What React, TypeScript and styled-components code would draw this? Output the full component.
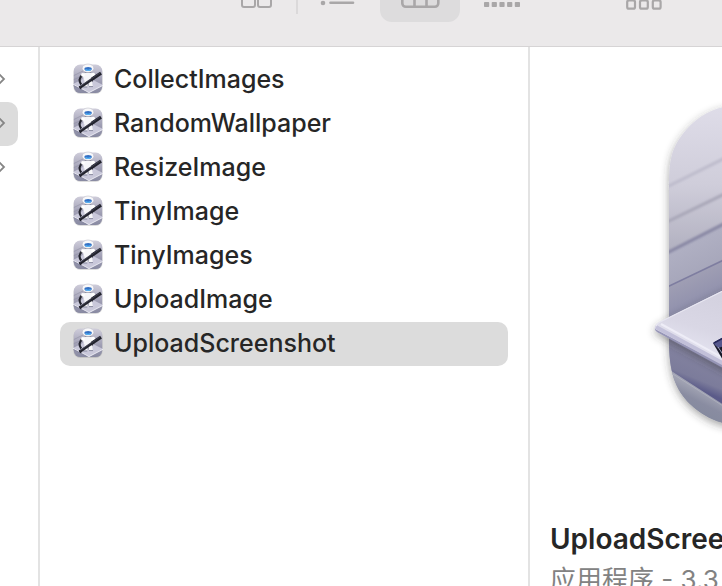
import React from "react";
import styled, { createGlobalStyle } from "styled-components";

const Global = createGlobalStyle`
  *, *::before, *::after { box-sizing: border-box; }
  body { margin: 0; overflow: hidden; background: #fff; }
  button { font: inherit; color: inherit; border: 0; padding: 0; background: none; text-align: left; }
  svg { display: block; flex: none; }
`;

const Window = styled.div`
  height: 100vh;
  display: flex;
  flex-direction: column;
  overflow: hidden;
  color: #262626;
  font-family: Inter, "Noto Sans CJK SC", sans-serif;
  font-size: 26px;
`;

const Toolbar = styled.header`
  display: flex;
  align-items: flex-start;
  flex: none;
  padding: 0 0 24px 216px;
  background: #ebe9ea;
  border-bottom: 1px solid #d6d4d5;
`;

const ViewButton = styled.button<{ $active?: boolean }>`
  flex: none;
  width: 80px;
  height: 22px;
  border-radius: 0 0 12px 12px;
  background: ${(p) => (p.$active ? "#dddcdd" : "transparent")};
`;

const Separator = styled.span<{ $visible?: boolean }>`
  flex: none;
  width: 2px;
  height: 14px;
  margin-right: ${(p) => (p.$visible ? 2 : 0)}px;
  background: ${(p) => (p.$visible ? "#dbd9da" : "transparent")};
`;

const GroupMenu = styled.div`
  display: flex;
  margin-left: 62px;
`;

const Browser = styled.main`
  flex: 1;
  min-height: 0;
  display: flex;
`;

const ParentColumn = styled.nav`
  flex: none;
  width: 40px;
  padding: 11px 20px 0 0;
  border-right: 2px solid #e3e3e3;
`;

const ParentRow = styled.button<{ $selected?: boolean }>`
  display: flex;
  align-items: center;
  width: 100%;
  height: 44px;
  padding-bottom: 2px;
  border-radius: 0 10px 10px 0;
  background: ${(p) => (p.$selected ? "#dcdcdc" : "transparent")};
`;

const FileColumn = styled.section`
  flex: none;
  width: 490px;
  border-right: 2px solid #e3e3e3;
`;

const FileList = styled.ul`
  list-style: none;
  margin: 0;
  padding: 11px 20px 0;
`;

const FileRow = styled.button<{ $selected?: boolean }>`
  display: flex;
  align-items: center;
  gap: 10px;
  width: 100%;
  height: 44px;
  padding: 0 12px 2px;
  border-radius: 10px;
  font-size: 25px;
  font-weight: 450;
  line-height: 32px;
  background: ${(p) => (p.$selected ? "#dcdcdc" : "transparent")};
`;

const Preview = styled.aside`
  flex: 1;
  min-width: 0;
  overflow: hidden;
  padding: 43px 0 0 20px;
  white-space: nowrap;
`;

const Artwork = styled.div`
  padding-left: 80px;
`;

const PreviewName = styled.h1`
  margin: 71px 0 0;
  font-size: 28px;
  line-height: 36px;
  font-weight: 600;
`;

const PreviewKind = styled.p`
  margin: 5px 0 0;
  line-height: 36px;
  color: #828282;
`;

const tint = "#a9a7a8";

const GridIcon = () => (
  <svg width="80" height="22" fill="none" stroke={tint} strokeWidth="2" aria-hidden="true">
    <rect x="26" y="-6" width="13" height="13" rx="2" />
    <rect x="42" y="-6" width="13" height="13" rx="2" />
  </svg>
);
const ListIcon = () => (
  <svg width="80" height="22" aria-hidden="true">
    <circle cx="23" cy="3" r="2.3" fill={tint} />
    <path d="M30.5 2.7H53" stroke={tint} strokeWidth="2.6" strokeLinecap="round" />
  </svg>
);
const ColumnsIcon = () => (
  <svg width="80" height="22" fill="none" stroke={tint} strokeWidth="2.6" aria-hidden="true">
    <rect x="22.3" y="-20" width="36" height="26.8" rx="3.5" />
    <path d="M34.5 0V7M46.5 0V7" />
  </svg>
);
const GalleryIcon = () => (
  <svg width="80" height="22" fill={tint} aria-hidden="true">
    {[22, 29.7, 37.4, 45.1, 52.8].map((x) => (
      <rect key={x} x={x} y="2" width="5.2" height="5" rx="0.8" />
    ))}
  </svg>
);
const GroupIcon = () => (
  <svg width="80" height="22" fill="none" stroke={tint} strokeWidth="2.2" aria-hidden="true">
    {[23.2, 36, 48.8].map((x) => (
      <rect key={x} x={x} y="0.3" width="7.8" height="8.4" rx="1.8" />
    ))}
  </svg>
);

const Chevron = () => (
  <svg width="8" height="14" fill="none" stroke="#858585" strokeWidth="1.8" aria-hidden="true">
    <path d="M-1 2L4 7L-1 12" />
  </svg>
);

const AppIcon = () => (
  <svg width="32" height="32" viewBox="0 0 32 32" aria-hidden="true">
    <defs>
      <linearGradient id="wall" x2="0" y2="1">
        <stop stopColor="#d3d1de" />
        <stop offset="0.6" stopColor="#9c9bb1" />
        <stop offset="1" stopColor="#85879f" />
      </linearGradient>
      <clipPath id="tile"><rect x="1.8" y="1.5" width="28.4" height="28.6" rx="6.5" /></clipPath>
    </defs>
    <rect x="1.4" y="2" width="29.2" height="29" rx="7" fill="#777" opacity="0.25" />
    <g clipPath="url(#tile)">
      <rect width="32" height="32" fill="url(#wall)" />
      <path d="M1 13L13 7M1 17L12 12" stroke="#8e8ea3" strokeWidth="0.6" />
    </g>
    <path d="M1 21L15 14L31 22L17 29.8Z" fill="#c9c8da" />
    <path d="M1 21.3L17 29.6L31 22.3" fill="none" stroke="#f1f0f7" strokeWidth="0.9" />
    <path d="M1.5 22.6L15 29.6" stroke="#85869f" strokeWidth="0.8" />
    <path d="M10.6 12C6.8 14.5 6.8 18.5 9.2 21.5" fill="none" stroke="#24252f" strokeWidth="2.2" />
    <path d="M21 11.5L22.6 15" fill="none" stroke="#4a4b58" strokeWidth="1.8" />
    <path d="M11.5 10.6Q16 8 20.7 10.6Q22 14 20 17.5L20.8 23.2H17L16.2 20.5L15.4 23.6H11.3L12.6 18Q10.3 14 11.5 10.6Z" fill="#f6f6f9" />
    <path d="M16.1 19.5V22.5" fill="none" stroke="#77788a" strokeWidth="0.9" />
    <path d="M11.2 24H15.3M17 23.6H21" stroke="#77788f" strokeWidth="0.8" />
    <circle cx="10.9" cy="11.8" r="1.9" fill="#ffffff" />
    <circle cx="21.2" cy="11.6" r="1.9" fill="#ffffff" />
    <path d="M12.8 9.5H19.2" stroke="#77788a" strokeWidth="1" />
    <ellipse cx="16" cy="5.2" rx="5.8" ry="4.2" fill="#f8f8fa" stroke="#b4b4c0" strokeWidth="0.5" />
    <ellipse cx="16.1" cy="5.9" rx="3.7" ry="1.9" fill="#3571c4" />
    <path d="M13.5 6.5Q16 8.3 18.7 6.5" stroke="#55b6f7" fill="none" strokeWidth="1.2" />
    <path d="M7.5 24.8L22 14.9" stroke="#22232d" strokeWidth="2.7" />
    <path d="M20 16.2L29 10.2" stroke="#22232d" strokeWidth="3.4" />
    <path d="M8 23.5L28.3 9.7" stroke="#626378" strokeWidth="0.5" />
    <path d="M7.4 23.2L9 26M19 15.8L20.6 18.4" stroke="#242530" strokeWidth="1.3" />
  </svg>
);

const Automator = () => (
  <svg width="340" height="360" viewBox="630 90 340 360" aria-hidden="true">
    <defs>
      <linearGradient id="back" gradientUnits="userSpaceOnUse" x1="0" y1="105" x2="0" y2="425">
        <stop stopColor="#dfdde9" />
        <stop offset="0.25" stopColor="#cfcdda" />
        <stop offset="0.44" stopColor="#b4b3c2" />
        <stop offset="0.6" stopColor="#a1a1b7" />
        <stop offset="1" stopColor="#888ba2" />
      </linearGradient>
      <linearGradient id="plank" gradientUnits="userSpaceOnUse" x1="690" y1="242" x2="706" y2="276">
        <stop stopColor="#b0b0c3" /><stop offset="1" stopColor="#a5a5b9" />
      </linearGradient>
      <linearGradient id="lower" gradientUnits="userSpaceOnUse" x1="690" y1="275" x2="708" y2="314">
        <stop stopColor="#a09fb4" /><stop offset="1" stopColor="#8889a9" />
      </linearGradient>
      <linearGradient id="under" gradientUnits="userSpaceOnUse" x1="704" y1="352" x2="690" y2="386">
        <stop stopColor="#8584a1" /><stop offset="0.75" stopColor="#7c7c9b" /><stop offset="1" stopColor="#5b5b89" />
      </linearGradient>
      <linearGradient id="floor" gradientUnits="userSpaceOnUse" x1="700" y1="390" x2="690" y2="410">
        <stop stopColor="#a0a2b2" /><stop offset="0.5" stopColor="#898ca1" /><stop offset="1" stopColor="#858a9e" />
      </linearGradient>
      <linearGradient id="desk" gradientUnits="userSpaceOnUse" x1="720" y1="292" x2="700" y2="352">
        <stop stopColor="#d3d1df" /><stop offset="0.65" stopColor="#d9d7e5" /><stop offset="1" stopColor="#e3e2ef" />
      </linearGradient>
      <filter id="shadow" x="-20%" y="-20%" width="140%" height="140%">
        <feDropShadow dx="0" dy="3" stdDeviation="4" floodColor="#333" floodOpacity="0.45" />
      </filter>
      <filter id="soft"><feGaussianBlur stdDeviation="1.2" /></filter>
      <clipPath id="body">
        <path d="M669 190C669 159 671 148 686 130C700 114 713 109 728 106C740 103 750 103 765 103H885C955 103 985 133 985 203V327C985 397 955 427 885 427H765C750 427 740 427 728 424C713 421 702 415 690 404C675 389 669 372 669 340Z" />
      </clipPath>
    </defs>
    <g filter="url(#shadow)">
      <path d="M669 190C669 159 671 148 686 130C700 114 713 109 728 106C740 103 750 103 765 103H885C955 103 985 133 985 203V327C985 397 955 427 885 427H765C750 427 740 427 728 424C713 421 702 415 690 404C675 389 669 372 669 340Z" fill="url(#back)" />
    </g>
    <g clipPath="url(#body)">
      <path d="M665 254L985 92V127L665 288Z" fill="url(#plank)" />
      <path d="M665 288L985 127V340H665Z" fill="url(#lower)" />
      <g filter="url(#soft)" fill="none">
        <path d="M665 188L745 148" stroke="#bebccc" strokeWidth="3" />
        <path d="M665 223L745 184" stroke="#a9a7b8" strokeWidth="3" />
        <path d="M665 254L745 213" stroke="#8786a3" strokeWidth="3" />
      </g>
      <path d="M665 288L745 250" stroke="#7e7da0" strokeWidth="1.6" />
      <path d="M660 331L780 399V443L665 367Z" fill="url(#under)" />
      <path d="M665 367L780 441V460H660Z" fill="url(#floor)" />
      <path d="M665 369L745 420" stroke="#bdbfc9" strokeWidth="1" opacity="0.5" />
    </g>
    <g filter="url(#shadow)">
      <path d="M655 330Q654 325 660 322L850 227L985 300V380L820 421L657 332Z" fill="#9796b7" />
    </g>
    <path d="M655 329Q654 325 660 322L850 227L985 300L820 415Z" fill="url(#desk)" />
    <path d="M656 327L820 416" fill="none" stroke="#c2c0d9" strokeWidth="4" />
    <path d="M661 324L820 411" fill="none" stroke="#eeedf7" strokeWidth="2" />
    <path d="M656 326Q657 323 662 321L745 280" fill="none" stroke="#e9e8f2" strokeWidth="1.3" />
    <path d="M713 343L735 331L760 380L738 386Z" fill="#171827" />
    <path d="M713 343L735 331L738 342L718 348Z" fill="#55578d" />
    <path d="M714 343L736 331" stroke="#252659" strokeWidth="1.5" />
    <path d="M718 347L738 377" stroke="#a4a5c4" strokeWidth="1" />
  </svg>
);

const files = [
  "CollectImages",
  "RandomWallpaper",
  "ResizeImage",
  "TinyImage",
  "TinyImages",
  "UploadImage",
  "UploadScreenshot",
];

export default function App() {
  return (
    <Window>
      <Global />
      <Toolbar>
        <ViewButton aria-label="Icons"><GridIcon /></ViewButton>
        <Separator $visible />
        <ViewButton aria-label="List"><ListIcon /></ViewButton>
        <ViewButton aria-label="Columns" aria-pressed="true" $active><ColumnsIcon /></ViewButton>
        <Separator />
        <ViewButton aria-label="Gallery"><GalleryIcon /></ViewButton>
        <GroupMenu>
          <ViewButton aria-label="Group"><GroupIcon /></ViewButton>
        </GroupMenu>
      </Toolbar>
      <Browser>
        <ParentColumn aria-label="Parent folder">
          {[false, true, false].map((selected, i) => (
            <ParentRow key={i} $selected={selected} aria-label={`Folder ${i + 1}`}><Chevron /></ParentRow>
          ))}
        </ParentColumn>
        <FileColumn>
          <FileList>
            {files.map((name) => (
              <li key={name}>
                <FileRow $selected={name === "UploadScreenshot"}>
                  <AppIcon />
                  {name}
                </FileRow>
              </li>
            ))}
          </FileList>
        </FileColumn>
        <Preview>
          <Artwork><Automator /></Artwork>
          <PreviewName>UploadScreenshot</PreviewName>
          <PreviewKind>应用程序 - 3.3 MB</PreviewKind>
        </Preview>
      </Browser>
    </Window>
  );
}
